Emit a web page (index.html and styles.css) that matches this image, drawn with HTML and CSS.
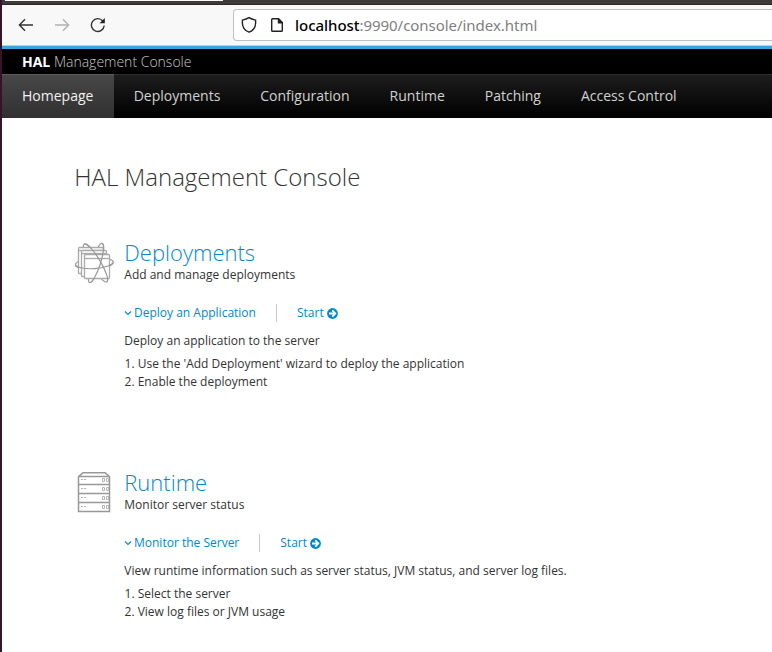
FILE: index.html
```
<!DOCTYPE html>
<html lang="en">
<head>
<meta charset="utf-8">
<title>Management Console</title>
<link rel="stylesheet" href="styles.css">
</head>
<body>
<div class="tabstrip"><div class="tab"></div></div>
<div class="toolbar">
  <svg class="tool back" width="16" height="16" viewBox="0 0 16 16"><path d="M15 8H1.6M7 2.2L1.4 8L7 13.8"/></svg>
  <svg class="tool forward" width="16" height="16" viewBox="0 0 16 16"><path d="M1 8H14.4M9 2.2L14.6 8L9 13.8"/></svg>
  <svg class="tool reload" width="16" height="16" viewBox="0 0 16 16"><path d="M14.2 8.5A6.4 6.4 0 1 1 12.8 4"/><path class="solid" d="M14.8 1V6.3H9.6Z"/></svg>
  <div class="urlbar">
    <svg class="shield" width="16" height="18" viewBox="0 0 16 18"><path d="M8 1.7C6 3 4 3.6 1.4 4.1V7.2C1.5 11.3 4.2 14.7 8 16.2C11.8 14.7 14.5 11.3 14.6 7.2V4.1C12 3.6 10 3 8 1.7Z"/></svg>
    <svg class="page" width="14" height="16" viewBox="0 0 14 16"><path d="M2.5 1.7H8.5L12.3 5.5V13.5Q12.3 14.3 11.5 14.3H2.5Q1.7 14.3 1.7 13.5V2.5Q1.7 1.7 2.5 1.7Z"/><path class="solid" d="M7.8 1.5V6.5H12.6V5.3L8.9 1.5Z"/></svg>
    <div class="url"><b>localhost</b>:9990/console/index.html</div>
  </div>
</div>
<header class="brand"><b>HAL</b> Management Console</header>
<nav class="nav">
  <a class="active">Homepage</a><a>Deployments</a><a>Configuration</a><a>Runtime</a><a>Patching</a><a>Access Control</a>
</nav>
<main>
  <h1>HAL Management Console</h1>
  <section>
    <svg class="icon" width="40" height="42" viewBox="0 0 40 42">
      <ellipse cx="19.3" cy="21.5" rx="19" ry="5.5" transform="rotate(-4 19.3 21.5)"/>
      <ellipse cx="20.5" cy="21" rx="22" ry="5" transform="rotate(59 20.5 21)"/>
      <ellipse cx="21" cy="21" rx="20.5" ry="4.5" transform="rotate(108 21 21)"/>
      <g class="sheets"><rect x="3.5" y="5.5" width="25" height="26" rx="1"/><path d="M3.5 8.5H28.5"/><rect x="6.5" y="8.5" width="25" height="26" rx="1"/><path d="M6.5 11.5H31.5"/><rect x="9.5" y="12.5" width="25" height="24" rx="1"/><path d="M9.5 16.5H34.5"/></g>
      <path d="M.4 22.8A19 5.500 -4 0 0 38.200 20.200"/>
      <path d="M9.200 2.100A22 5 59 0 1 31.800 39.900"/>
      <path d="M27.300 1.500A20.500 4.500 108 0 1 14.700 40.500"/>
    </svg>
    <div class="info">
      <h2>Deployments</h2>
      <p class="sub">Add and manage deployments</p>
      <div class="links"><a class="toggle"><svg width="8" height="6" viewBox="0 0 8 6"><path d="M1 1.5L4 4.5L7 1.5"/></svg>Deploy an Application</a><a class="start">Start<svg width="11" height="11" viewBox="0 0 10 10"><circle cx="5" cy="5" r="4.9"/><path d="M1.8 5H7.5M4.8 2.200L7.600 5L4.800 7.800"/></svg></a></div>
      <p class="desc">Deploy an application to the server</p>
      <ol><li>Use the 'Add Deployment' wizard to deploy the application</li><li>Enable the deployment</li></ol>
    </div>
  </section>
  <section>
    <svg class="icon" width="40" height="42" viewBox="0 0 40 42">
      <path class="case" d="M3.5 4.500L8 .8H30L34.500 4.500V39.500H3.500ZM3.500 4.500H34.500M3.500 12.500H34.500M3.500 21.500H34.500M3.500 30.500H34.500"/>
      <path class="detail" d="M6 7.500h2m1 0h2M6 16.500h2m1 0h2M6 25.500h2m1 0h2M6 34.500h2m1 0h2M27.500 6.500h2v3h-2zM31.500 6.500h2v3h-2zM27.500 15.500h2v3h-2zM31.500 15.500h2v3h-2zM27.500 24.500h2v3h-2zM31.500 24.500h2v3h-2zM27.500 33.500h2v3h-2zM31.500 33.500h2v3h-2z"/>
    </svg>
    <div class="info">
      <h2>Runtime</h2>
      <p class="sub">Monitor server status</p>
      <div class="links"><a class="toggle"><svg width="8" height="6" viewBox="0 0 8 6"><path d="M1 1.5L4 4.5L7 1.5"/></svg>Monitor the Server</a><a class="start">Start<svg width="11" height="11" viewBox="0 0 10 10"><circle cx="5" cy="5" r="4.9"/><path d="M1.8 5H7.5M4.8 2.200L7.600 5L4.800 7.800"/></svg></a></div>
      <p class="desc">View runtime information such as server status, JVM status, and server log files.</p>
      <ol><li>Select the server</li><li>View log files or JVM usage</li></ol>
    </div>
  </section>
</main>
</body>
</html>
```
FILE: styles.css
```
* { box-sizing: border-box; }
html { background: #fff; }
body { margin: 0; height: 652px; overflow: hidden; border-left: 2px solid #35142a; font: 12px/18px "Open Sans", sans-serif; color: #333; background: #fff; }
h1, h2, p, ol { margin: 0; padding: 0; }
svg { display: block; flex: none; fill: none; }
.tabstrip { height: 5px; background: #3d3b3a; border-bottom: 1px solid #292827; padding-left: 3px; }
.tab { width: 218px; height: 1px; background: #f8f8f7; }
.toolbar { height: 41px; display: flex; align-items: center; background: #f8f8f8; border-bottom: 1px solid #ccc; padding-left: 16px; }
.tool { stroke: #333; stroke-width: 1.4; }
.forward { margin-left: 20px; stroke: #b0b0b0; }
.reload { margin-left: 20px; }
.solid { fill: #222; stroke: none; }
.urlbar { height: 32px; flex: 1; margin-left: 127px; display: flex; align-items: center; background: #fff; border: 1px solid #c1c1c1; border-right: 0; border-radius: 4px 0 0 4px; padding-left: 7px; }
.shield, .page { stroke: #222; stroke-width: 1.4; }
.page { margin-left: 13px; }
.url { margin-left: 11px; font: 15px/20px "Noto Sans", sans-serif; letter-spacing: -0.04px; color: #808080; white-space: nowrap; }
.url b { color: #000; font-weight: 500; }
.brand { height: 28px; border-top: 3px solid #39a5dc; background: #000; color: #c8c8c8; font-size: 14px; line-height: 25px; font-weight: 300; padding-left: 20px; }
.brand b { color: #fff; font-weight: 700; }
.nav { height: 44px; display: flex; background: linear-gradient(#1d1d1d, #000); border-top: 1px solid #2b2b2b; }
.nav a { padding: 0 20px; font-size: 14px; line-height: 42px; color: #d1d1d1; white-space: nowrap; }
.nav .active { padding-right: 20.3px; color: #f1f1f1; background: linear-gradient(#474747, #303030); box-shadow: 0 -1px #5c5c5c; }
main { height: 534px; overflow: hidden; padding: 42px 0 0 73px; }
h1 { margin-left: -0.7px; font-size: 24px; line-height: 33px; font-weight: 300; }
section { display: flex; height: 230px; }
section:last-child { height: 180px; }
h1 + section { margin-top: 49px; }
.icon { width: 40px; stroke: #999; stroke-width: 1.2; }
.sheets { stroke: #aaa; stroke-width: 1.3; fill: #fff; }
.info { margin-left: 9.3px; }
h2 { font-size: 22px; line-height: 20px; margin-bottom: 4px; font-weight: 300; color: #0088ce; }
.links { display: flex; align-items: center; margin: 20px 0 0 -0.3px; color: #0088ce; }
.toggle, .start { display: flex; align-items: center; }
.toggle svg { stroke: #0088ce; stroke-width: 1.1; margin-right: 2px; }
.start { border-left: 1px solid #c7c7c7; margin-left: 20px; padding-left: 20px; }
.start svg { margin-left: 3px; fill: #0088ce; }
.start svg path { stroke: #fff; stroke-width: 1.6; fill: none; }
.desc { margin-top: 10px; }
ol { margin-top: 5px; padding-left: 13.4px; }
.case { stroke: #999; stroke-width: 1.5; }
.detail { stroke: #b5b5b5; stroke-width: 1; }
```
